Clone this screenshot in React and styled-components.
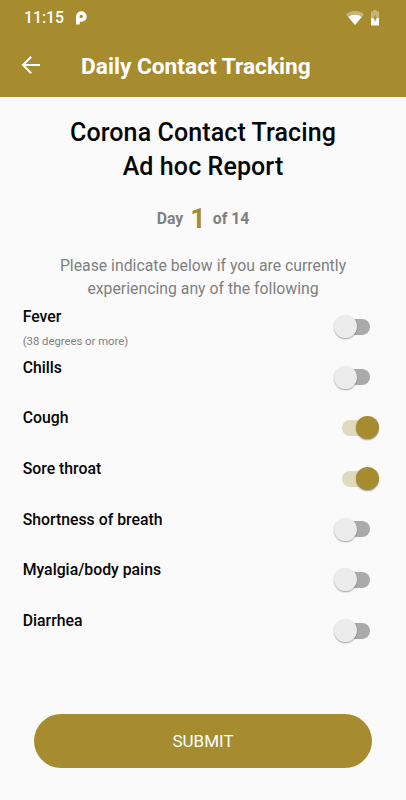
import React, { useState } from 'react';
import styled, { createGlobalStyle, ThemeProvider } from 'styled-components';

const theme = {
    colors: {
        primary: '#a68c2e',
        primaryLight: '#dfd9bd',
        background: '#fafafa',
        text: '#050505',
        muted: '#808080',
        track: '#aaaaaa',
        thumb: '#ececec',
    },
};

const GlobalStyle = createGlobalStyle`
    * { box-sizing: border-box; }
    body { margin: 0; font-family: Roboto, 'Liberation Sans', sans-serif; background: ${theme.colors.background}; }
    h1, h2, p { margin: 0; }
    button { font-family: inherit; border: none; padding: 0; cursor: pointer; }
`;

const Screen = styled.div` width: 406px; height: 800px; display: flex; flex-direction: column; overflow: hidden; background: ${({ theme }) => theme.colors.background}; `;
const TopBar = styled.header` height: 97px; flex-shrink: 0; color: #fff; background: ${({ theme }) => theme.colors.primary}; `;
const StatusBar = styled.div` height: 36px; display: flex; align-items: center; padding: 0 27px 0 24px; `;
const Clock = styled.span` width: 52px; font-size: 15.8px; line-height: 20px; font-weight: 500; `;
const StatusIcons = styled.div` margin-left: auto; display: flex; align-items: center; gap: 7px; `;
const Toolbar = styled.div` height: 61px; display: flex; align-items: center; padding: 0 21px; `;
const BackButton = styled.button` width: 60px; height: 24px; display: flex; align-items: center; color: inherit; background: none; margin-top: -4px; `;
const ToolbarTitle = styled.h1` font-size: 22.7px; line-height: 28px; font-weight: 700; white-space: nowrap; `;
const Content = styled.main` flex: 1; display: flex; flex-direction: column; padding-top: 19px; `;
const Heading = styled.h2` font-size: 25px; line-height: 34.4px; font-weight: 500; letter-spacing: 0.1px; text-align: center; color: ${({ theme }) => theme.colors.text}; `;
const DayLine = styled.div` height: 34px; margin-top: 17.2px; display: flex; justify-content: center; align-items: center; gap: 7px; font-size: 15.8px; line-height: 34px; font-weight: 700; color: ${({ theme }) => theme.colors.muted}; `;
const DayNumber = styled.span` font-size: 27px; color: ${({ theme }) => theme.colors.primary}; `;
const Instructions = styled.p` margin-top: 18px; font-size: 15.8px; line-height: 23px; text-align: center; color: ${({ theme }) => theme.colors.muted}; `;
const SymptomList = styled.div` display: flex; flex-direction: column; `;
const SymptomRow = styled.div` height: 50.7px; display: flex; justify-content: space-between; padding: 6px 27px 0 22.7px; `;
const SymptomName = styled.p` font-size: 15.8px; line-height: 22px; font-weight: 500; color: ${({ theme }) => theme.colors.text}; `;
const SymptomNote = styled.p` margin-top: 6px; font-size: 11.3px; line-height: 16px; color: ${({ theme }) => theme.colors.muted}; `;
const Switch = styled.button` width: 46px; height: 23px; margin-top: 9px; display: grid; align-items: center; background: none; `;
const Track = styled.span` grid-area: 1 / 1; width: 28px; height: 16px; margin-left: 9.2px; border-radius: 8px; background: ${({ theme, $on }) => ($on ? theme.colors.primaryLight : theme.colors.track)}; `;
const Thumb = styled.span` grid-area: 1 / 1; width: 23px; height: 23px; margin-left: ${({ $on }) => ($on ? '23px' : '0.5px')}; border-radius: 50%; background: ${({ theme, $on }) => ($on ? theme.colors.primary : theme.colors.thumb)}; box-shadow: 0 1px 1.5px rgba(0, 0, 0, 0.35); `;
const SubmitButton = styled.button` width: 338px; height: 54px; margin: auto auto 32px; border-radius: 27px; color: #fff; background: ${({ theme }) => theme.colors.primary}; font-size: 17px; line-height: 24px; font-weight: 400; `;

const PieIcon = () => (
    <svg width="12" height="14" viewBox="0 0 12 14">
        <path fill="#fff" fillRule="evenodd" d="M0 13.5V5.4A5.2 5.2 0 0 1 5.3 0.3A5.2 5.2 0 0 1 10.7 5.4A5.2 5.2 0 0 1 5.3 10.7H3.8V13.5ZM5.3 3.7A1.7 1.7 0 0 0 3.6 5.4V7.1H5.3A1.7 1.7 0 0 0 5.3 3.7Z" />
    </svg>
);

const WifiIcon = () => (
    <svg width="18" height="15" viewBox="0 0 18 15">
        <path fill="#fff" fillOpacity="0.35" d="M0 3.2C5-1 13-1 18 3.2L9 14Z" />
        <path fill="#fff" d="M2.3 6C6 2.9 12 2.9 15.7 6L9 14Z" />
    </svg>
);

const BatteryIcon = () => (
    <svg width="8" height="16" viewBox="0 0 8 16">
        <path fill="#fff" fillOpacity="0.35" d="M2.3 0H5.7V1.5H8V8H0V1.5H2.3Z" />
        <path fill="#fff" d="M0 8H8V15.5H0Z" />
        <path fill={theme.colors.primary} d="M4.9 4L2.2 8.8H3.6V12.2L5.9 7.8H4.6Z" />
    </svg>
);

const BackIcon = () => (
    <svg width="20" height="20" viewBox="0 0 20 20" fill="none" stroke="#fff" strokeWidth="2">
        <path d="M19 10H2.4M10.2 1.8L2 10L10.2 18.2" />
    </svg>
);

const initialSymptoms = [
    { name: 'Fever', note: '(38 degrees or more)', on: false },
    { name: 'Chills', on: false },
    { name: 'Cough', on: true },
    { name: 'Sore throat', on: true },
    { name: 'Shortness of breath', on: false },
    { name: 'Myalgia/body pains', on: false },
    { name: 'Diarrhea', on: false },
];

const Symptom = ({ name, note, on, onToggle }) => (
    <SymptomRow>
        <div>
            <SymptomName>{name}</SymptomName>
            {note && <SymptomNote>{note}</SymptomNote>}
        </div>
        <Switch role="switch" aria-checked={on} aria-label={name} onClick={onToggle}>
            <Track $on={on} />
            <Thumb $on={on} />
        </Switch>
    </SymptomRow>
);

const App = () => {
    const [symptoms, setSymptoms] = useState(initialSymptoms);
    const toggle = (name) => setSymptoms(symptoms.map((s) => (s.name === name ? { ...s, on: !s.on } : s)));

    return (
        <ThemeProvider theme={theme}>
            <GlobalStyle />
            <Screen>
                <TopBar>
                    <StatusBar>
                        <Clock>11:15</Clock>
                        <PieIcon />
                        <StatusIcons>
                            <WifiIcon />
                            <BatteryIcon />
                        </StatusIcons>
                    </StatusBar>
                    <Toolbar>
                        <BackButton aria-label="Back"><BackIcon /></BackButton>
                        <ToolbarTitle>Daily Contact Tracking</ToolbarTitle>
                    </Toolbar>
                </TopBar>
                <Content>
                    <Heading>Corona Contact Tracing<br />Ad hoc Report</Heading>
                    <DayLine>
                        <span>Day</span>
                        <DayNumber>1</DayNumber>
                        <span>of 14</span>
                    </DayLine>
                    <Instructions>Please indicate below if you are currently<br />experiencing any of the following</Instructions>
                    <SymptomList>
                        {symptoms.map((s) => (
                            <Symptom key={s.name} {...s} onToggle={() => toggle(s.name)} />
                        ))}
                    </SymptomList>
                    <SubmitButton>SUBMIT</SubmitButton>
                </Content>
            </Screen>
        </ThemeProvider>
    );
};

export default App;
